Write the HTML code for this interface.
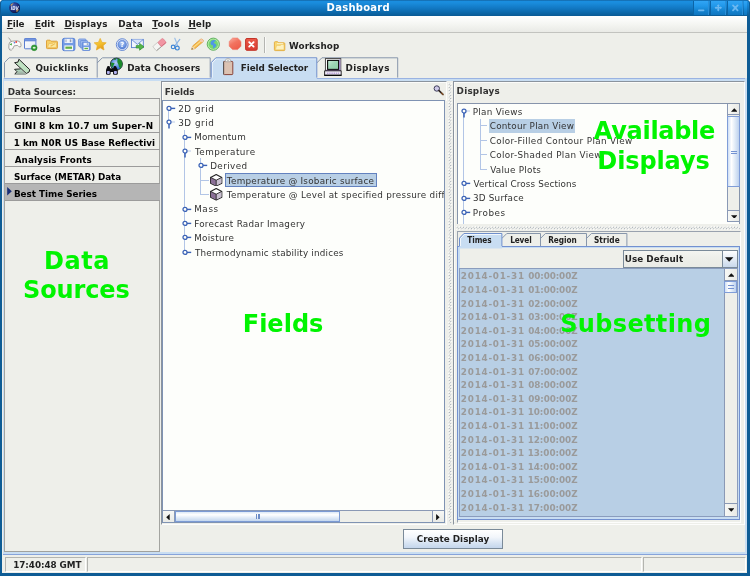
<!DOCTYPE html>
<html lang="en"><head><meta charset="utf-8"><title>Dashboard</title>
<style>
html,body{margin:0;padding:0;background:#fff;overflow:hidden}
body{width:750px;height:576px;position:relative;font-family:'DejaVu Sans','Liberation Sans',sans-serif}
div,span.t,svg{position:absolute;box-sizing:border-box}
span.t{white-space:pre;line-height:12px;height:12px}
u{text-decoration:underline;text-underline-offset:1px;text-decoration-thickness:0.8px}
</style></head>
<body>
<div id="win" style="left:0;top:0;width:750px;height:576px;will-change:transform">
<div style="left:0px;top:0px;width:750px;height:576px;background:#0e5c95;border-radius:4px 4px 0 0"></div>
<div style="left:0px;top:0px;width:750px;height:16.2px;background:linear-gradient(#125f9b 0,#1a8ee0 1.2px,#1a8cdc 3px,#1279c4 8px,#0c68aa 12.5px,#0a5e9a 15px,#0a5a94 16.2px);border-radius:4px 4px 0 0;border-left:1px solid #0e5c95;border-right:1px solid #0e5c95"></div>
<svg style="left:8.8px;top:2px" width="11.4" height="11.4" viewBox="0 0 12 12"><defs><radialGradient id="gl" cx="40%" cy="35%" r="70%"><stop offset="0" stop-color="#4a62b8"/><stop offset="0.6" stop-color="#1c2c78"/><stop offset="1" stop-color="#0a1238"/></radialGradient></defs><circle cx="6" cy="6" r="5.8" fill="url(#gl)"/><path d="M1.2 3.5 Q3 1 5 1.2 Q3.5 2.5 3 4Z" fill="#c9a56a"/><path d="M7.5 8.5 Q9.5 8 10.5 7 Q10 9.5 8 10.8Z" fill="#b58e5a"/><text x="6" y="8" font-size="5.6" font-weight="bold" font-style="italic" text-anchor="middle" fill="#e8ecf8" font-family="DejaVu Sans,sans-serif" textLength="8.4" lengthAdjust="spacingAndGlyphs">IDV</text></svg>
<span class="t" style="left:326.60px;top:1.74px;font-size:10px;font-weight:bold;color:#fff;font-family:'DejaVu Sans','Liberation Sans',sans-serif;letter-spacing:0.265px;">Dashboard</span>
<div style="left:693px;top:0.8px;width:16.4px;height:14px;background:linear-gradient(#31a5f5 0%,#2198ea 35%,#1482cf 70%,#0f76c0 100%);border-left:1px solid #0c64a6;border-right:1px solid #2a90da"></div>
<div style="left:710px;top:0.8px;width:16.4px;height:14px;background:linear-gradient(#31a5f5 0%,#2198ea 35%,#1482cf 70%,#0f76c0 100%);border-left:1px solid #0c64a6;border-right:1px solid #2a90da"></div>
<div style="left:727px;top:0.8px;width:16.4px;height:14px;background:linear-gradient(#31a5f5 0%,#2198ea 35%,#1482cf 70%,#0f76c0 100%);border-left:1px solid #0c64a6;border-right:1px solid #2a90da"></div>
<div style="left:743.5px;top:0.8px;width:3px;height:14px;background:linear-gradient(#31a5f5 0%,#2198ea 35%,#1482cf 70%,#0f76c0 100%)"></div>
<svg style="left:693px;top:0" width="51" height="16" viewBox="0 0 51 16"><g stroke="#6cb8f1" fill="none" stroke-width="1.6" stroke-linecap="round"><path d="M5.8 10.4H10.6"/><path d="M25.3 5.6V10M23 7.8H27.6" stroke-width="1.5"/><path d="M25.3 4.2l1.5 1.8h-3zM25.3 11.4l1.5-1.8h-3zM21.6 7.8l1.8-1.5v3zM29 7.8l-1.8-1.5v3z" fill="#6cb8f1" stroke="none"/><path d="M40 5.4l4.6 5M44.6 5.4l-4.6 5" stroke-width="1.8"/></g></svg>
<div style="left:2.3px;top:16.2px;width:745px;height:556.7px;background:#eeefea"></div>
<div style="left:2.3px;top:16.2px;width:745px;height:16px;background:linear-gradient(#ffffff 0%,#f6f7f4 45%,#e9eae6 100%)"></div>
<div style="left:2.3px;top:32px;width:745px;height:0.9px;background:#c2c3bf"></div>
<span class="t" style="left:6.90px;top:17.76px;font-size:8.8px;font-weight:bold;color:#222;font-family:'DejaVu Sans','Liberation Sans',sans-serif;letter-spacing:-0.131px;"><u>F</u>ile</span>
<span class="t" style="left:34.90px;top:17.76px;font-size:8.8px;font-weight:bold;color:#222;font-family:'DejaVu Sans','Liberation Sans',sans-serif;letter-spacing:0.074px;"><u>E</u>dit</span>
<span class="t" style="left:64.40px;top:17.76px;font-size:8.8px;font-weight:bold;color:#222;font-family:'DejaVu Sans','Liberation Sans',sans-serif;letter-spacing:0.210px;"><u>D</u>isplays</span>
<span class="t" style="left:118.20px;top:17.76px;font-size:8.8px;font-weight:bold;color:#222;font-family:'DejaVu Sans','Liberation Sans',sans-serif;letter-spacing:0.367px;">D<u>a</u>ta</span>
<span class="t" style="left:152.20px;top:17.76px;font-size:8.8px;font-weight:bold;color:#222;font-family:'DejaVu Sans','Liberation Sans',sans-serif;letter-spacing:0.502px;"><u>T</u>ools</span>
<span class="t" style="left:188.40px;top:17.76px;font-size:8.8px;font-weight:bold;color:#222;font-family:'DejaVu Sans','Liberation Sans',sans-serif;letter-spacing:0.100px;"><u>H</u>elp</span>
<svg style="left:6px;top:36px" width="17" height="16" viewBox="6 36 17 16"><path d="M8.5 37.6L12 42" stroke="#8c8c88" stroke-width="0.8" fill="none"/><path d="M9 44Q9.4 41.4 12.2 41.2L17 40.8Q20 40.8 20.8 43.6Q21.5 46.4 20.4 47Q19 47.4 17.6 45.4L14.2 45.8Q13.4 47.4 12.6 49Q11.4 50.8 9.8 50Q8.2 49 9 44Z" fill="#fbfbfa" stroke="#8e8e8a" stroke-width="0.8"/><path d="M9.6 44.4l2.2-1.3v2.4z" fill="#3aa53a"/><circle cx="16.2" cy="42" r="0.95" fill="#e8413c"/><circle cx="14.4" cy="42.8" r="0.8" fill="#4a76e0"/><path d="M10 48.6Q10.6 49.4 11.4 48.8" stroke="#b4b4b0" stroke-width="0.6" fill="none"/></svg>
<svg style="left:23px;top:37px" width="16" height="15" viewBox="23 37 16 15"><defs><linearGradient id="wg" x1="0" y1="0" x2="1" y2="1"><stop offset="0" stop-color="#ffffff"/><stop offset="1" stop-color="#dfe8f6"/></linearGradient></defs><rect x="24.5" y="38.6" width="11.4" height="10.2" rx="0.8" fill="url(#wg)" stroke="#5a7ed0" stroke-width="1"/><rect x="24.5" y="38.6" width="11.4" height="2.4" rx="0.8" fill="#7396e0" stroke="#5a7ed0" stroke-width="0.6"/><circle cx="34.2" cy="47.8" r="2.9" fill="#2e9a32" stroke="#23822a" stroke-width="0.5"/><ellipse cx="34.2" cy="47.7" rx="1.5" ry="1" fill="#d8f2d4"/></svg>
<svg style="left:45px;top:38px" width="15" height="13" viewBox="45 38 15 13"><path d="M46.5 41Q46.5 40.2 47.3 40.2H50L51 41.2H56.6Q57.4 41.2 57.4 42V47.8Q57.4 48.6 56.6 48.6H47.3Q46.5 48.6 46.5 47.8Z" fill="#f7d066" stroke="#dc9c30" stroke-width="0.9"/><path d="M47.6 47.6L48.8 43.6H52.4L53.2 42.6H56.4V47.6Z" fill="#fbe7a0" stroke="#e6b044" stroke-width="0.5"/><path d="M50.6 46.2L55 43.6" stroke="#ecbc4c" stroke-width="1.1"/></svg>
<svg style="left:61px;top:37px" width="16" height="15" viewBox="61 37 16 15"><rect x="62.5" y="38.3" width="12.4" height="12.4" rx="1.8" fill="#739be4" stroke="#5a84d6" stroke-width="1"/><rect x="64.6" y="38.8" width="8" height="4.2" fill="#eef3fc"/><rect x="69.8" y="39.4" width="1.5" height="2.8" fill="#8e9cb8"/><rect x="65.4" y="39.4" width="1.2" height="2.8" fill="#aab4c8"/><rect x="64.4" y="45.4" width="8.6" height="4.8" fill="#f6f9f4"/><rect x="65.4" y="46.6" width="6.6" height="2.2" fill="#62ae44"/></svg>
<svg style="left:77px;top:37px" width="16" height="15" viewBox="77 37 16 15"><rect x="78.6" y="39" width="7.4" height="7.4" rx="0.9" fill="#a9c2f0" stroke="#6088d8" stroke-width="0.8"/><rect x="80.2" y="40.6" width="7.4" height="7.4" rx="0.9" fill="#9bb8ee" stroke="#6088d8" stroke-width="0.8"/><rect x="82.2" y="42.4" width="8" height="8" rx="1" fill="#739be4" stroke="#5a84d6" stroke-width="0.8"/><rect x="83.6" y="42.8" width="5" height="2.6" fill="#eef3fc"/><rect x="86.8" y="43.2" width="1" height="1.8" fill="#8e9cb8"/><rect x="83.6" y="47" width="5.2" height="3" fill="#f6f9f4"/><rect x="84.4" y="47.8" width="3.6" height="1.4" fill="#62ae44"/></svg>
<svg style="left:92px;top:36px" width="17" height="16" viewBox="92 36 17 16"><defs><linearGradient id="sg" x1="0" y1="0" x2="0.4" y2="1"><stop offset="0" stop-color="#fbd447"/><stop offset="0.6" stop-color="#f2be2c"/><stop offset="1" stop-color="#e39a1c"/></linearGradient></defs><path d="M100.2 38.4L102 42.4L106.2 42.8L103.1 45.7L104 50L100.2 47.8L96.4 50L97.3 45.7L94.2 42.8L98.4 42.4Z" fill="url(#sg)" stroke="#e8ac28" stroke-width="0.7" stroke-linejoin="round"/></svg>
<svg style="left:114px;top:37px" width="16" height="15" viewBox="114 37 16 15"><defs><radialGradient id="hg" cx="45%" cy="35%" r="70%"><stop offset="0" stop-color="#b4cdf6"/><stop offset="1" stop-color="#4a78d4"/></radialGradient></defs><circle cx="122.2" cy="44.6" r="5.9" fill="#dfe8fa" stroke="#5a80d0" stroke-width="0.9"/><circle cx="122.2" cy="44.6" r="4.3" fill="url(#hg)" stroke="#4a72c8" stroke-width="0.5"/><text x="122.2" y="47.2" font-size="7" font-weight="bold" text-anchor="middle" fill="#fff" font-family="DejaVu Sans,sans-serif">?</text></svg>
<svg style="left:130px;top:37px" width="16" height="15" viewBox="130 37 16 15"><rect x="131.5" y="39.4" width="11.8" height="8.2" fill="#f0f5fd" stroke="#5a80d0" stroke-width="0.9"/><path d="M131.7 39.6L137.4 44.4L143.1 39.6" fill="#d5e2f8" stroke="#5a80d0" stroke-width="0.8"/><path d="M136.2 45.6H139.6V43.4L144 46.8L139.6 50.2V48H136.2Z" fill="#56b44a" stroke="#2f9030" stroke-width="0.7" stroke-linejoin="round"/></svg>
<svg style="left:151px;top:36px" width="17" height="16" viewBox="151 36 17 16"><g transform="rotate(-40 159.6 44.4)"><rect x="153" y="41.6" width="6.8" height="5.8" rx="0.9" fill="#f4f4f2" stroke="#b8b8b4" stroke-width="0.6"/><path d="M153.4 47.2H159.8" stroke="#9a9a96" stroke-width="0.9"/><rect x="159.4" y="41.6" width="6.6" height="5.8" rx="1.1" fill="#f195a2" stroke="#dc7a88" stroke-width="0.6"/><path d="M159.6 47H165.6" stroke="#d06a7a" stroke-width="0.8"/></g></svg>
<svg style="left:169px;top:36px" width="14" height="16" viewBox="169 36 14 16"><path d="M174.8 38.2L177.6 45.4" stroke="#9cbfe8" stroke-width="1.2" stroke-linecap="round"/><path d="M179.8 39.4L175 45.6" stroke="#8ab2e2" stroke-width="1.2" stroke-linecap="round"/><circle cx="173.1" cy="46.9" r="1.8" fill="none" stroke="#3f86d6" stroke-width="1.2"/><circle cx="177.3" cy="48.1" r="1.9" fill="none" stroke="#3f86d6" stroke-width="1.2"/></svg>
<svg style="left:189px;top:36px" width="17" height="16" viewBox="189 36 17 16"><path d="M191.6 49.4L192.6 46L200.4 39.4Q201.6 38.6 202.8 39.8Q203.8 41 203 41.8L195 48.6Z" fill="#f6b84a" stroke="#dc9428" stroke-width="0.7" stroke-linejoin="round"/><path d="M193.8 47.2L201.4 40.6" stroke="#fbe08e" stroke-width="1.1"/><path d="M200.4 39.4Q201.6 38.6 202.8 39.8Q203.8 41 203 41.8L202 42.6L199.4 40.2Z" fill="#f4c8b4"/><path d="M191.6 49.4L192.6 46L195 48.6Z" fill="#f3d9b0"/><path d="M191.6 49.4L192 48L193 48.9Z" fill="#444"/></svg>
<svg style="left:205px;top:36px" width="17" height="16" viewBox="205 36 17 16"><circle cx="213.3" cy="44.2" r="6.1" fill="#b4eaa6" stroke="#58aa58" stroke-width="0.9"/><circle cx="213.3" cy="44.2" r="4.7" fill="#74d870"/><path d="M212 40.4Q214.6 39.6 216 41Q214 41.6 213.6 43Q215.6 43.4 216.4 45.2Q215.6 47.6 213.4 48.6Q212.6 47 213.2 45.6Q211 45.4 210.4 43.4Q210.6 41.4 212 40.4Z" fill="#4f96e6"/></svg>
<svg style="left:227px;top:36px" width="16" height="15" viewBox="227 36 16 15"><defs><linearGradient id="rg" x1="0" y1="0" x2="0.6" y2="1"><stop offset="0" stop-color="#fbb0a4"/><stop offset="0.5" stop-color="#f27460"/><stop offset="1" stop-color="#ee5e4c"/></linearGradient></defs><path d="M232.6 38H237.6L241 41.4V46.2L237.6 49.6H232.6L229.2 46.2V41.4Z" fill="url(#rg)" stroke="#ee6e5e" stroke-width="0.5"/></svg>
<svg style="left:243px;top:36px" width="16" height="15" viewBox="243 36 16 15"><defs><linearGradient id="xg" x1="0" y1="0" x2="0" y2="1"><stop offset="0" stop-color="#ec5a4a"/><stop offset="1" stop-color="#d83a30"/></linearGradient></defs><rect x="245.6" y="38.5" width="11.6" height="11.8" rx="1.4" fill="url(#xg)" stroke="#c23428" stroke-width="1"/><path d="M249.2 42.2L253.6 46.6M253.6 42.2L249.2 46.6" stroke="#fff" stroke-width="1.9" stroke-linecap="round"/></svg>
<svg style="left:272px;top:39px" width="15" height="13" viewBox="272 39 15 13"><path d="M274.4 42.4Q274.4 41.7 275.2 41.7H277.6L278.6 42.8H284Q284.8 42.8 284.8 43.6V49.8Q284.8 50.6 284 50.6H275.2Q274.4 50.6 274.4 49.8Z" fill="#f8d874" stroke="#e2aa3a" stroke-width="0.9"/><path d="M275.4 49.8L276.6 45.4H280.4L281.2 44.4H284V49.8Z" fill="#fdf1c0" stroke="#eabc54" stroke-width="0.5"/><path d="M277 43.6H283" stroke="#fdf6dc" stroke-width="0.8"/></svg>
<div style="left:263.6px;top:37px;width:1px;height:15.5px;background:#b4b5b1"></div>
<div style="left:264.6px;top:37px;width:1px;height:15.5px;background:#fafaf8"></div>
<span class="t" style="left:288.95px;top:39.56px;font-size:8.8px;font-weight:bold;color:#222;font-family:'DejaVu Sans','Liberation Sans',sans-serif;letter-spacing:0.132px;">Workshop</span>
<div style="left:3px;top:78px;width:744.2px;height:3.2px;background:#c8ddf2"></div>
<div style="left:3px;top:77.5px;width:744.2px;height:0.9px;background:#9ab3e2"></div>
<div style="left:2.6px;top:78px;width:1.6px;height:475.5px;background:#c8ddf2"></div>
<div style="left:745.4px;top:78px;width:1.8px;height:475.5px;background:#c8ddf2"></div>
<div style="left:3px;top:552px;width:744.2px;height:1.6px;background:#c8ddf2"></div>
<div style="left:3px;top:553.5px;width:744.2px;height:0.9px;background:#86a3da"></div>
<svg style="left:3px;top:56px" width="97" height="27" viewBox="3 56 97 27"><path d="M4.5 77.6V62.6L9.1 57.8H97.2V77.6" fill="#eeefea" stroke="#8796ab" stroke-width="1"/></svg>
<svg style="left:96px;top:56px" width="117" height="27" viewBox="96 56 117 27"><path d="M97.1 63L102.3 57.8H210.2V77.6" fill="none" stroke="#8796ab" stroke-width="1"/></svg>
<svg style="left:315px;top:56px" width="86" height="27" viewBox="315 56 86 27"><path d="M316.7 63L321.9 57.8H397.7V77.6" fill="none" stroke="#8796ab" stroke-width="1"/></svg>
<svg style="left:209px;top:56px" width="111" height="27" viewBox="209 56 111 27"><path d="M211.2 81.2V62.6L215.8 57.8H316.8V81.2Z" fill="#c8ddf2"/><path d="M212.2 77.6V63L216.2 58.8H316" fill="none" stroke="#fff" stroke-width="0.9" opacity="0.85"/><path d="M211.2 77.6V62.6L215.8 57.8H316.8V77.6" fill="none" stroke="#6f8fcc" stroke-width="1"/></svg>
<svg style="left:12px;top:57px" width="20" height="20" viewBox="12 57 20 20"><defs><linearGradient id="qg" x1="0" y1="0" x2="0" y2="1"><stop offset="0" stop-color="#b6e2c6"/><stop offset="1" stop-color="#9aa49c"/></linearGradient></defs><path d="M14.8 69.3L20.6 68.9L26 74.4H14.8L16.9 71.6Z" fill="url(#qg)"/><path d="M26 74.4H14.8" stroke="#8f9a94" stroke-width="0.7" fill="none"/><path d="M20.6 68.9L14.6 69.3L16.9 71.6L14.8 74.2" stroke="#111" stroke-width="0.9" fill="none" stroke-linejoin="miter"/><path d="M18.9 59.2L29.7 69.6L29.1 72L26.3 73.5L15.2 63.2L14.6 62.7L18 62.1Z" fill="#c0e2c2" stroke="#111" stroke-width="0.9" stroke-linejoin="round"/></svg>
<svg style="left:104px;top:57px" width="22" height="20" viewBox="104 57 22 20"><defs><radialGradient id="dg" cx="45%" cy="40%" r="60%"><stop offset="0" stop-color="#b8cff6"/><stop offset="0.6" stop-color="#5a8fe0"/><stop offset="1" stop-color="#2a6ac8"/></radialGradient></defs><circle cx="116.4" cy="64.1" r="6" fill="url(#dg)" stroke="#1a2a1e" stroke-width="0.9"/><path d="M117.6 58.6Q121.6 59 122.3 63.4Q122.4 66.4 120.4 68.4Q118.6 66.8 118.4 64.4Q116.6 62.4 117.6 58.6Z" fill="#1c8a2c"/><path d="M111 62.4Q112.8 62.6 114.6 63.2Q113.4 65 112.6 67.6Q110.6 66 111 62.4Z" fill="#1c8a2c"/><path d="M113.4 59.4Q115 58.4 116.4 58.6L115.4 60Z" fill="#1c8a2c"/><path d="M107.4 66.2Q108.4 65.6 109.6 66.2L110.6 69.4V73.6Q110.6 74.8 109.4 74.8H107.2Q106 74.8 106 73.6V70Z" fill="#0c0c10"/><path d="M113.8 66.2Q114.8 65.6 116 66.2L117.8 70V73.6Q117.8 74.8 116.6 74.8H114.2Q113 74.8 113 73.6V69.4Z" fill="#0c0c10"/><rect x="110" y="68.4" width="3.6" height="3.6" fill="#0c0c10"/><rect x="106.9" y="71" width="2.9" height="2.9" rx="0.8" fill="#b2b2ee"/><rect x="113.9" y="71" width="3" height="2.9" rx="0.8" fill="#b2b2ee"/></svg>
<svg style="left:221px;top:57px" width="14" height="20" viewBox="221 57 14 20"><rect x="223.6" y="61.4" width="9.2" height="13.2" rx="0.8" fill="#dcc2b2" stroke="#8a4438" stroke-width="1"/><path d="M223.6 61.6V74.4" stroke="#555" stroke-width="1"/><path d="M225.2 61.8Q225.2 58.4 228 58.4Q230.8 58.4 230.8 61.8Z" fill="#f6f6f4" stroke="#a2a29e" stroke-width="0.7"/><circle cx="228" cy="60.2" r="0.7" fill="#9a9a96"/></svg>
<svg style="left:322px;top:57px" width="22" height="20" viewBox="322 57 22 20"><defs><linearGradient id="cg" x1="0" y1="0" x2="1" y2="1"><stop offset="0" stop-color="#c8ecd8"/><stop offset="0.5" stop-color="#9cd4b4"/><stop offset="1" stop-color="#8ed0a8"/></linearGradient></defs><rect x="325.4" y="58.6" width="15.4" height="11.8" fill="#fbfbfb" stroke="#3a3a3a" stroke-width="0.9"/><rect x="339" y="59.4" width="1.4" height="10.6" fill="#b49adc"/><rect x="327.6" y="60.4" width="11" height="9" fill="url(#cg)" stroke="#0a0a0a" stroke-width="1.1"/><path d="M326 70.4H340.4" stroke="#7a4ea8" stroke-width="0.9"/><path d="M324.6 70.8H341.2V75.2H324.6Z" fill="#ece6f4" stroke="#1a1a1a" stroke-width="0.9"/><path d="M324.2 75.4H341.6" stroke="#0a0a0a" stroke-width="1.2"/><path d="M327 73.2H339" stroke="#a88ace" stroke-width="1" stroke-dasharray="1.4 0.8"/></svg>
<span class="t" style="left:35.40px;top:61.96px;font-size:8.8px;font-weight:bold;color:#222;font-family:'DejaVu Sans','Liberation Sans',sans-serif;letter-spacing:0.219px;">Quicklinks</span>
<span class="t" style="left:127.20px;top:61.96px;font-size:8.8px;font-weight:bold;color:#222;font-family:'DejaVu Sans','Liberation Sans',sans-serif;letter-spacing:0.095px;">Data Choosers</span>
<span class="t" style="left:240.80px;top:61.96px;font-size:8.8px;font-weight:bold;color:#222;font-family:'DejaVu Sans','Liberation Sans',sans-serif;letter-spacing:-0.083px;">Field Selector</span>
<span class="t" style="left:345.60px;top:61.96px;font-size:8.8px;font-weight:bold;color:#222;font-family:'DejaVu Sans','Liberation Sans',sans-serif;letter-spacing:0.324px;">Displays</span>
<div style="left:4.2px;top:98px;width:156px;height:453.6px;border-left:1px solid #a3a4a0;border-right:1px solid #a3a4a0;border-bottom:1px solid #a0a19d"></div>
<span class="t" style="left:7.80px;top:85.76px;font-size:8.8px;font-weight:bold;color:#333;font-family:'DejaVu Sans','Liberation Sans',sans-serif;letter-spacing:-0.101px;">Data Sources:</span>
<div style="left:5px;top:182.8px;width:154.6px;height:17px;background:#b5b5b5"></div>
<div style="left:5px;top:98px;width:154.6px;height:1px;background:#9b9b9b"></div>
<span class="t" style="left:13.90px;top:102.76px;font-size:8.8px;font-weight:bold;color:#000;font-family:'DejaVu Sans','Liberation Sans',sans-serif;letter-spacing:0.160px;">Formulas</span>
<div style="left:5px;top:115px;width:154.6px;height:1px;background:#9b9b9b"></div>
<span class="t" style="left:14.30px;top:119.76px;font-size:8.8px;font-weight:bold;color:#000;font-family:'DejaVu Sans','Liberation Sans',sans-serif;letter-spacing:0.158px;">GINI 8 km 10.7 um Super-N</span>
<div style="left:5px;top:132px;width:154.6px;height:1px;background:#9b9b9b"></div>
<span class="t" style="left:13.75px;top:136.76px;font-size:8.8px;font-weight:bold;color:#000;font-family:'DejaVu Sans','Liberation Sans',sans-serif;letter-spacing:0.022px;">1 km N0R US Base Reflectivi</span>
<div style="left:5px;top:149px;width:154.6px;height:1px;background:#9b9b9b"></div>
<span class="t" style="left:14.70px;top:153.76px;font-size:8.8px;font-weight:bold;color:#000;font-family:'DejaVu Sans','Liberation Sans',sans-serif;letter-spacing:0.094px;">Analysis Fronts</span>
<div style="left:5px;top:166px;width:154.6px;height:1px;background:#9b9b9b"></div>
<span class="t" style="left:14.10px;top:170.76px;font-size:8.8px;font-weight:bold;color:#000;font-family:'DejaVu Sans','Liberation Sans',sans-serif;letter-spacing:-0.107px;">Surface (METAR) Data</span>
<div style="left:5px;top:183px;width:154.6px;height:1px;background:#9b9b9b"></div>
<span class="t" style="left:13.90px;top:187.76px;font-size:8.8px;font-weight:bold;color:#000;font-family:'DejaVu Sans','Liberation Sans',sans-serif;letter-spacing:-0.006px;">Best Time Series</span>
<div style="left:5px;top:200px;width:154.6px;height:1px;background:#9b9b9b"></div>
<svg style="left:7px;top:187.4px" width="5" height="8.4" viewBox="0 0 5 8.4"><path d="M0.2 0L4.8 4.2L0.2 8.4Z" fill="#1a2f78"/></svg>
<div style="left:161px;top:81.4px;width:286.4px;height:443.4px;border-left:1px solid #8a939e;border-top:1px solid #8a939e;border-right:1.6px solid #fdfdfc;border-bottom:1.6px solid #fdfdfc"></div>
<div style="left:162px;top:82.4px;width:283.6px;height:1px;background:#fbfbf9"></div>
<div style="left:162px;top:82.4px;width:0.8px;height:440px;background:#fbfbf9"></div>
<span class="t" style="left:164.80px;top:85.56px;font-size:8.8px;font-weight:bold;color:#333;font-family:'DejaVu Sans','Liberation Sans',sans-serif;letter-spacing:0.048px;">Fields</span>
<svg style="left:432px;top:84px" width="14" height="12" viewBox="432 84 14 12"><circle cx="436.8" cy="88.5" r="2.7" fill="#cdc8e8" stroke="#3c3c58" stroke-width="1"/><path d="M439 90.6L442.9 94.3" stroke="#2e2420" stroke-width="1.7" stroke-linecap="round"/><path d="M441.6 93.1L443.1 94.5" stroke="#d0782c" stroke-width="1" stroke-linecap="round"/></svg>
<div style="left:162.4px;top:100px;width:282.6px;height:423px;background:#fdfefb;border:1px solid #7f93b3"></div>
<div style="left:168.1px;top:108px;width:1px;height:15px;background:#b2c5e6"></div>
<div style="left:184px;top:129.6px;width:1px;height:122.8px;background:#b2c5e6"></div>
<div style="left:200px;top:158px;width:1px;height:36.6px;background:#b2c5e6"></div>
<div style="left:200.5px;top:179.7px;width:8.5px;height:1px;background:#b2c5e6"></div>
<div style="left:200.5px;top:194.1px;width:8.5px;height:1px;background:#b2c5e6"></div>
<div style="left:225px;top:173.4px;width:151.6px;height:13.8px;background:#b8cfe5;border:1px solid #6382bf"></div>
<svg style="left:165px;top:104.8px" width="12" height="8" viewBox="0 0 12 8"><path d="M6 3.4H10.2" stroke="#3a62b6" stroke-width="1.4"/><circle cx="4" cy="3.4" r="2" fill="#fdfefb" stroke="#3a62b6" stroke-width="1.25"/></svg>
<span class="t" style="left:178.20px;top:102.56px;font-size:8.8px;font-weight:normal;color:#333;font-family:'DejaVu Sans','Liberation Sans',sans-serif;letter-spacing:0.546px;">2D grid</span>
<svg style="left:165px;top:119.2px" width="12" height="11" viewBox="0 0 12 11"><path d="M4 5V9.4" stroke="#3a62b6" stroke-width="1.5"/><path d="M6 3H10" stroke="#b2c5e6" stroke-width="0.9"/><circle cx="4" cy="3" r="2" fill="#fdfefb" stroke="#3a62b6" stroke-width="1.25"/></svg>
<span class="t" style="left:178.15px;top:116.96px;font-size:8.8px;font-weight:normal;color:#333;font-family:'DejaVu Sans','Liberation Sans',sans-serif;letter-spacing:0.555px;">3D grid</span>
<svg style="left:181px;top:133.6px" width="12" height="8" viewBox="0 0 12 8"><path d="M6 3.4H10.2" stroke="#3a62b6" stroke-width="1.4"/><circle cx="4" cy="3.4" r="2" fill="#fdfefb" stroke="#3a62b6" stroke-width="1.25"/></svg>
<span class="t" style="left:194.15px;top:131.36px;font-size:8.8px;font-weight:normal;color:#333;font-family:'DejaVu Sans','Liberation Sans',sans-serif;letter-spacing:0.205px;">Momentum</span>
<svg style="left:181px;top:148px" width="12" height="11" viewBox="0 0 12 11"><path d="M4 5V9.4" stroke="#3a62b6" stroke-width="1.5"/><path d="M6 3H10" stroke="#b2c5e6" stroke-width="0.9"/><circle cx="4" cy="3" r="2" fill="#fdfefb" stroke="#3a62b6" stroke-width="1.25"/></svg>
<span class="t" style="left:195.05px;top:145.76px;font-size:8.8px;font-weight:normal;color:#333;font-family:'DejaVu Sans','Liberation Sans',sans-serif;letter-spacing:0.427px;">Temperature</span>
<svg style="left:197px;top:162.4px" width="12" height="8" viewBox="0 0 12 8"><path d="M6 3.4H10.2" stroke="#3a62b6" stroke-width="1.4"/><circle cx="4" cy="3.4" r="2" fill="#fdfefb" stroke="#3a62b6" stroke-width="1.25"/></svg>
<span class="t" style="left:210.15px;top:160.16px;font-size:8.8px;font-weight:normal;color:#333;font-family:'DejaVu Sans','Liberation Sans',sans-serif;letter-spacing:0.429px;">Derived</span>
<svg style="left:210.4px;top:173.6px" width="12.4" height="12.6" viewBox="0 0 12.4 12.6"><path d="M6.2 0.6L11.8 3.4V9.2L6.2 12L0.6 9.2V3.4Z" fill="#fff" stroke="#222" stroke-width="1.1" stroke-linejoin="round"/><path d="M0.9 3.7L6.2 6.3V11.7L0.9 9.1Z" fill="#8a6f96"/><path d="M11.5 3.7L6.2 6.3V11.7L11.5 9.1Z" fill="#c9bfd0"/><path d="M0.6 3.4L6.2 6.2L11.8 3.4M6.2 6.2V12" fill="none" stroke="#222" stroke-width="0.9"/></svg>
<span class="t" style="left:226.85px;top:174.56px;font-size:8.8px;font-weight:normal;color:#333;font-family:'DejaVu Sans','Liberation Sans',sans-serif;letter-spacing:0.252px;">Temperature @ Isobaric surface</span>
<svg style="left:210.4px;top:188px" width="12.4" height="12.6" viewBox="0 0 12.4 12.6"><path d="M6.2 0.6L11.8 3.4V9.2L6.2 12L0.6 9.2V3.4Z" fill="#fff" stroke="#222" stroke-width="1.1" stroke-linejoin="round"/><path d="M0.9 3.7L6.2 6.3V11.7L0.9 9.1Z" fill="#8a6f96"/><path d="M11.5 3.7L6.2 6.3V11.7L11.5 9.1Z" fill="#c9bfd0"/><path d="M0.6 3.4L6.2 6.2L11.8 3.4M6.2 6.2V12" fill="none" stroke="#222" stroke-width="0.9"/></svg>
<span class="t" style="left:226.85px;top:188.96px;font-size:8.8px;font-weight:normal;color:#333;font-family:'DejaVu Sans','Liberation Sans',sans-serif;letter-spacing:0.286px;">Temperature @ Level at specified pressure diff</span>
<svg style="left:181px;top:205.6px" width="12" height="8" viewBox="0 0 12 8"><path d="M6 3.4H10.2" stroke="#3a62b6" stroke-width="1.4"/><circle cx="4" cy="3.4" r="2" fill="#fdfefb" stroke="#3a62b6" stroke-width="1.25"/></svg>
<span class="t" style="left:194.15px;top:203.36px;font-size:8.8px;font-weight:normal;color:#333;font-family:'DejaVu Sans','Liberation Sans',sans-serif;letter-spacing:0.627px;">Mass</span>
<svg style="left:181px;top:220px" width="12" height="8" viewBox="0 0 12 8"><path d="M6 3.4H10.2" stroke="#3a62b6" stroke-width="1.4"/><circle cx="4" cy="3.4" r="2" fill="#fdfefb" stroke="#3a62b6" stroke-width="1.25"/></svg>
<span class="t" style="left:194.15px;top:217.76px;font-size:8.8px;font-weight:normal;color:#333;font-family:'DejaVu Sans','Liberation Sans',sans-serif;letter-spacing:0.275px;">Forecast Radar Imagery</span>
<svg style="left:181px;top:234.4px" width="12" height="8" viewBox="0 0 12 8"><path d="M6 3.4H10.2" stroke="#3a62b6" stroke-width="1.4"/><circle cx="4" cy="3.4" r="2" fill="#fdfefb" stroke="#3a62b6" stroke-width="1.25"/></svg>
<span class="t" style="left:194.15px;top:232.16px;font-size:8.8px;font-weight:normal;color:#333;font-family:'DejaVu Sans','Liberation Sans',sans-serif;letter-spacing:0.263px;">Moisture</span>
<svg style="left:181px;top:248.8px" width="12" height="8" viewBox="0 0 12 8"><path d="M6 3.4H10.2" stroke="#3a62b6" stroke-width="1.4"/><circle cx="4" cy="3.4" r="2" fill="#fdfefb" stroke="#3a62b6" stroke-width="1.25"/></svg>
<span class="t" style="left:195.05px;top:246.56px;font-size:8.8px;font-weight:normal;color:#333;font-family:'DejaVu Sans','Liberation Sans',sans-serif;letter-spacing:0.181px;">Thermodynamic stability indices</span>
<div style="left:444px;top:101px;width:1px;height:409px;background:#7f93b3"></div>
<div style="left:445px;top:101px;width:2px;height:409px;background:#eeefea"></div>
<div style="left:163.4px;top:510.4px;width:280.6px;height:11.6px;background:#eeefea;border-top:1px solid #8a99b5"></div>
<div style="left:163.4px;top:511.2px;width:11.8px;height:10.8px;background:linear-gradient(#f7f8f5,#e9eae6);border-right:1px solid #8a99b5"></div>
<div style="left:431.8px;top:511.2px;width:12.2px;height:10.8px;background:linear-gradient(#f7f8f5,#e9eae6);border-left:1px solid #8a99b5"></div>
<svg style="left:166.3px;top:513.8px" width="3.8" height="6.6" viewBox="0 0 3.8 6.6"><path d="M3.7 0V6.6L0.2 3.3Z" fill="#111"/></svg>
<svg style="left:436.2px;top:513.8px" width="3.8" height="6.6" viewBox="0 0 3.8 6.6"><path d="M0.1 0V6.6L3.6 3.3Z" fill="#111"/></svg>
<div style="left:175.2px;top:510.8px;width:164.4px;height:11.2px;background:linear-gradient(#dce8f6 0%,#ffffff 30%,#e4edf8 60%,#c3d6ee 100%);border:1px solid #7b9ad4"></div>
<div style="left:255.8px;top:513.6px;width:0.9px;height:5.8px;background:#6c8cc6"></div>
<div style="left:257.6px;top:513.6px;width:0.9px;height:5.8px;background:#6c8cc6"></div>
<div style="left:259.4px;top:513.6px;width:0.9px;height:5.8px;background:#6c8cc6"></div>
<div style="left:448.2px;top:83px;width:3.4px;height:440px;background-image:radial-gradient(circle at 1.2px 1.2px,#8792a4 0.35px,transparent 0.75px),radial-gradient(circle at 2.8px 2.8px,#8792a4 0.35px,transparent 0.75px),radial-gradient(circle at 0.4px 0.4px,#fff 0.35px,transparent 0.75px),radial-gradient(circle at 2px 2px,#fff 0.35px,transparent 0.75px);background-size:3.2px 3.2px"></div>
<div style="left:453px;top:81.4px;width:292px;height:443.4px;border-left:1px solid #8a939e;border-top:1px solid #8a939e;border-right:1.6px solid #fdfdfc;border-bottom:1.6px solid #fdfdfc"></div>
<div style="left:454px;top:82.4px;width:289.4px;height:1px;background:#fbfbf9"></div>
<div style="left:454px;top:82.4px;width:0.8px;height:440px;background:#fbfbf9"></div>
<span class="t" style="left:456.60px;top:85.36px;font-size:8.8px;font-weight:bold;color:#333;font-family:'DejaVu Sans','Liberation Sans',sans-serif;letter-spacing:0.239px;">Displays</span>
<div style="left:457px;top:103.2px;width:283.2px;height:120.4px;background:#fdfefb;border:1px solid #8694ab;border-bottom:none"></div>
<div style="left:463.3px;top:113px;width:1px;height:110.6px;background:#b2c5e6"></div>
<div style="left:479.5px;top:119px;width:1px;height:50.2px;background:#b2c5e6"></div>
<div style="left:480px;top:125.3px;width:7px;height:1px;background:#b2c5e6"></div>
<div style="left:480px;top:139.7px;width:7px;height:1px;background:#b2c5e6"></div>
<div style="left:480px;top:154.1px;width:7px;height:1px;background:#b2c5e6"></div>
<div style="left:480px;top:168.5px;width:7px;height:1px;background:#b2c5e6"></div>
<div style="left:489.2px;top:119px;width:86px;height:13.6px;background:#b8cfe5"></div>
<svg style="left:460px;top:108.2px" width="12" height="11" viewBox="0 0 12 11"><path d="M4 5V9.4" stroke="#3a62b6" stroke-width="1.5"/><path d="M6 3H10" stroke="#b2c5e6" stroke-width="0.9"/><circle cx="4" cy="3" r="2" fill="#fdfefb" stroke="#3a62b6" stroke-width="1.25"/></svg>
<span class="t" style="left:472.75px;top:105.96px;font-size:8.8px;font-weight:normal;color:#333;font-family:'DejaVu Sans','Liberation Sans',sans-serif;letter-spacing:0.294px;">Plan Views</span>
<span class="t" style="left:489.75px;top:120.36px;font-size:8.8px;font-weight:normal;color:#333;font-family:'DejaVu Sans','Liberation Sans',sans-serif;letter-spacing:0.241px;">Contour Plan View</span>
<span class="t" style="left:489.75px;top:134.76px;font-size:8.8px;font-weight:normal;color:#333;font-family:'DejaVu Sans','Liberation Sans',sans-serif;letter-spacing:0.377px;">Color-Filled Contour Plan View</span>
<span class="t" style="left:489.75px;top:149.16px;font-size:8.8px;font-weight:normal;color:#333;font-family:'DejaVu Sans','Liberation Sans',sans-serif;letter-spacing:0.375px;">Color-Shaded Plan View</span>
<span class="t" style="left:490.15px;top:163.56px;font-size:8.8px;font-weight:normal;color:#333;font-family:'DejaVu Sans','Liberation Sans',sans-serif;letter-spacing:0.270px;">Value Plots</span>
<svg style="left:460px;top:180.2px" width="12" height="8" viewBox="0 0 12 8"><path d="M6 3.4H10.2" stroke="#3a62b6" stroke-width="1.4"/><circle cx="4" cy="3.4" r="2" fill="#fdfefb" stroke="#3a62b6" stroke-width="1.25"/></svg>
<span class="t" style="left:473.55px;top:177.96px;font-size:8.8px;font-weight:normal;color:#333;font-family:'DejaVu Sans','Liberation Sans',sans-serif;letter-spacing:0.132px;">Vertical Cross Sections</span>
<svg style="left:460px;top:194.6px" width="12" height="8" viewBox="0 0 12 8"><path d="M6 3.4H10.2" stroke="#3a62b6" stroke-width="1.4"/><circle cx="4" cy="3.4" r="2" fill="#fdfefb" stroke="#3a62b6" stroke-width="1.25"/></svg>
<span class="t" style="left:472.95px;top:192.36px;font-size:8.8px;font-weight:normal;color:#333;font-family:'DejaVu Sans','Liberation Sans',sans-serif;letter-spacing:0.224px;">3D Surface</span>
<svg style="left:460px;top:209px" width="12" height="8" viewBox="0 0 12 8"><path d="M6 3.4H10.2" stroke="#3a62b6" stroke-width="1.4"/><circle cx="4" cy="3.4" r="2" fill="#fdfefb" stroke="#3a62b6" stroke-width="1.25"/></svg>
<span class="t" style="left:472.75px;top:206.76px;font-size:8.8px;font-weight:normal;color:#333;font-family:'DejaVu Sans','Liberation Sans',sans-serif;letter-spacing:0.578px;">Probes</span>
<div style="left:727.2px;top:104.2px;width:12.2px;height:117.6px;background:#eeefea;border-left:1px solid #8a99b5"></div>
<div style="left:728.2px;top:104.2px;width:11.2px;height:11.2px;background:linear-gradient(90deg,#f7f8f5,#e9eae6);border-bottom:1px solid #8a99b5"></div>
<div style="left:728.2px;top:210.2px;width:11.2px;height:11.6px;background:linear-gradient(90deg,#f7f8f5,#e9eae6);border-top:1px solid #8a99b5"></div>
<svg style="left:730.5px;top:108.2px" width="6.6" height="3.8" viewBox="0 0 6.6 3.8"><path d="M0 3.7H6.6L3.3 0.2Z" fill="#111"/></svg>
<svg style="left:730.5px;top:214.7px" width="6.6" height="3.8" viewBox="0 0 6.6 3.8"><path d="M0 0.2H6.6L3.3 3.7Z" fill="#111"/></svg>
<div style="left:727.2px;top:115.8px;width:12.4px;height:70.8px;background:linear-gradient(90deg,#cfdff4 0%,#ffffff 32%,#e4edf8 60%,#bdd1ee 100%);border:1px solid #7f9dd8"></div>
<div style="left:730.6px;top:150.7px;width:6.4px;height:1.1px;background:#7492d2"></div>
<div style="left:730.6px;top:152.8px;width:6.4px;height:1.1px;background:#7492d2"></div>
<div style="left:727.2px;top:221.4px;width:13px;height:0.9px;background:#8a99b5"></div>
<div style="left:456px;top:226.2px;width:284px;height:3.4px;background-image:radial-gradient(circle at 1.2px 1.2px,#8792a4 0.35px,transparent 0.75px),radial-gradient(circle at 2.8px 2.8px,#8792a4 0.35px,transparent 0.75px),radial-gradient(circle at 0.4px 0.4px,#fff 0.35px,transparent 0.75px),radial-gradient(circle at 2px 2px,#fff 0.35px,transparent 0.75px);background-size:3.2px 3.2px"></div>
<div style="left:457px;top:231px;width:284.4px;height:291.6px;border-left:1px solid #99a2ae;border-top:1px solid #99a2ae;border-right:1px solid #fdfdfc;border-bottom:1px solid #fdfdfc"></div>
<div style="left:457.2px;top:245.8px;width:283px;height:274.2px;background:#7391d0"></div>
<div style="left:458.2px;top:246.6px;width:281.2px;height:272.6px;background:#c8ddf2"></div>
<div style="left:460.2px;top:248.4px;width:277.6px;height:268.2px;background:#eeefea"></div>
<svg style="left:500px;top:232px" width="44" height="18" viewBox="500 232 44 18"><path d="M501.8 238.5L506.8 233.5H540.5V246" fill="none" stroke="#8796ab" stroke-width="1"/></svg>
<svg style="left:539px;top:232px" width="51" height="18" viewBox="539 232 51 18"><path d="M540.4 238.5L545.4 233.5H586.5V246" fill="none" stroke="#8796ab" stroke-width="1"/></svg>
<svg style="left:585px;top:232px" width="45" height="18" viewBox="585 232 45 18"><path d="M586.4 238.5L591.4 233.5H626.9V246" fill="none" stroke="#8796ab" stroke-width="1"/></svg>
<svg style="left:458px;top:232px" width="47" height="18" viewBox="458 232 47 18"><path d="M459.5 248.4V238.1L463.9 233.5H501.9V248.4Z" fill="#c8ddf2"/><path d="M460.5 246V238.5L464.3 234.5H501.1" fill="none" stroke="#fff" stroke-width="0.9" opacity="0.85"/><path d="M459.5 246V238.1L463.9 233.5H501.9V246" fill="none" stroke="#6f8fcc" stroke-width="1"/></svg>
<span class="t" style="left:467.20px;top:233.76px;font-size:8.2px;font-weight:bold;color:#222;font-family:'DejaVu Sans Condensed','DejaVu Sans','Liberation Sans',sans-serif;letter-spacing:-0.025px;">Times</span>
<span class="t" style="left:510.15px;top:233.76px;font-size:8.2px;font-weight:bold;color:#222;font-family:'DejaVu Sans Condensed','DejaVu Sans','Liberation Sans',sans-serif;letter-spacing:-0.105px;">Level</span>
<span class="t" style="left:548.15px;top:233.76px;font-size:8.2px;font-weight:bold;color:#222;font-family:'DejaVu Sans Condensed','DejaVu Sans','Liberation Sans',sans-serif;letter-spacing:-0.043px;">Region</span>
<span class="t" style="left:593.90px;top:233.76px;font-size:8.2px;font-weight:bold;color:#222;font-family:'DejaVu Sans Condensed','DejaVu Sans','Liberation Sans',sans-serif;letter-spacing:0.112px;">Stride</span>
<div style="left:623px;top:249.6px;width:114.6px;height:18.6px;background:linear-gradient(#f4f5f1,#eeefea 40%,#eaebe6);border:1px solid #7a8a99"></div>
<div style="left:722px;top:250.6px;width:14.6px;height:16.6px;background:linear-gradient(#ffffff,#dfe8f3 60%,#c9d8ec);border-left:1px solid #7a8a99"></div>
<svg style="left:725.2px;top:257.2px" width="8.4" height="5" viewBox="0 0 8.4 5"><path d="M0 0.2H8.4L4.2 4.8Z" fill="#111"/></svg>
<span class="t" style="left:624.80px;top:252.56px;font-size:8.8px;font-weight:bold;color:#222;font-family:'DejaVu Sans','Liberation Sans',sans-serif;letter-spacing:0.041px;">Use Default</span>
<div style="left:459.4px;top:268px;width:278.2px;height:248.8px;background:#b8cfe5;border:1px solid #8a9cbd;overflow:hidden"></div>
<span class="t" style="left:460.85px;top:270.36px;font-size:8.8px;font-weight:bold;color:#9a9a9a;font-family:'DejaVu Sans','Liberation Sans',sans-serif;letter-spacing:0.770px;">2014-01-31</span>
<span class="t" style="left:528.20px;top:270.36px;font-size:8.8px;font-weight:bold;color:#9a9a9a;font-family:'DejaVu Sans','Liberation Sans',sans-serif;letter-spacing:-0.097px;">00:00:00Z</span>
<span class="t" style="left:460.85px;top:283.96px;font-size:8.8px;font-weight:bold;color:#9a9a9a;font-family:'DejaVu Sans','Liberation Sans',sans-serif;letter-spacing:0.770px;">2014-01-31</span>
<span class="t" style="left:528.20px;top:283.96px;font-size:8.8px;font-weight:bold;color:#9a9a9a;font-family:'DejaVu Sans','Liberation Sans',sans-serif;letter-spacing:-0.097px;">01:00:00Z</span>
<span class="t" style="left:460.85px;top:297.56px;font-size:8.8px;font-weight:bold;color:#9a9a9a;font-family:'DejaVu Sans','Liberation Sans',sans-serif;letter-spacing:0.770px;">2014-01-31</span>
<span class="t" style="left:528.20px;top:297.56px;font-size:8.8px;font-weight:bold;color:#9a9a9a;font-family:'DejaVu Sans','Liberation Sans',sans-serif;letter-spacing:-0.097px;">02:00:00Z</span>
<span class="t" style="left:460.85px;top:311.16px;font-size:8.8px;font-weight:bold;color:#9a9a9a;font-family:'DejaVu Sans','Liberation Sans',sans-serif;letter-spacing:0.770px;">2014-01-31</span>
<span class="t" style="left:528.20px;top:311.16px;font-size:8.8px;font-weight:bold;color:#9a9a9a;font-family:'DejaVu Sans','Liberation Sans',sans-serif;letter-spacing:-0.097px;">03:00:00Z</span>
<span class="t" style="left:460.85px;top:324.76px;font-size:8.8px;font-weight:bold;color:#9a9a9a;font-family:'DejaVu Sans','Liberation Sans',sans-serif;letter-spacing:0.770px;">2014-01-31</span>
<span class="t" style="left:528.20px;top:324.76px;font-size:8.8px;font-weight:bold;color:#9a9a9a;font-family:'DejaVu Sans','Liberation Sans',sans-serif;letter-spacing:-0.097px;">04:00:00Z</span>
<span class="t" style="left:460.85px;top:338.36px;font-size:8.8px;font-weight:bold;color:#9a9a9a;font-family:'DejaVu Sans','Liberation Sans',sans-serif;letter-spacing:0.770px;">2014-01-31</span>
<span class="t" style="left:528.20px;top:338.36px;font-size:8.8px;font-weight:bold;color:#9a9a9a;font-family:'DejaVu Sans','Liberation Sans',sans-serif;letter-spacing:-0.097px;">05:00:00Z</span>
<span class="t" style="left:460.85px;top:351.96px;font-size:8.8px;font-weight:bold;color:#9a9a9a;font-family:'DejaVu Sans','Liberation Sans',sans-serif;letter-spacing:0.770px;">2014-01-31</span>
<span class="t" style="left:528.20px;top:351.96px;font-size:8.8px;font-weight:bold;color:#9a9a9a;font-family:'DejaVu Sans','Liberation Sans',sans-serif;letter-spacing:-0.097px;">06:00:00Z</span>
<span class="t" style="left:460.85px;top:365.56px;font-size:8.8px;font-weight:bold;color:#9a9a9a;font-family:'DejaVu Sans','Liberation Sans',sans-serif;letter-spacing:0.770px;">2014-01-31</span>
<span class="t" style="left:528.20px;top:365.56px;font-size:8.8px;font-weight:bold;color:#9a9a9a;font-family:'DejaVu Sans','Liberation Sans',sans-serif;letter-spacing:-0.097px;">07:00:00Z</span>
<span class="t" style="left:460.85px;top:379.16px;font-size:8.8px;font-weight:bold;color:#9a9a9a;font-family:'DejaVu Sans','Liberation Sans',sans-serif;letter-spacing:0.770px;">2014-01-31</span>
<span class="t" style="left:528.20px;top:379.16px;font-size:8.8px;font-weight:bold;color:#9a9a9a;font-family:'DejaVu Sans','Liberation Sans',sans-serif;letter-spacing:-0.097px;">08:00:00Z</span>
<span class="t" style="left:460.85px;top:392.76px;font-size:8.8px;font-weight:bold;color:#9a9a9a;font-family:'DejaVu Sans','Liberation Sans',sans-serif;letter-spacing:0.770px;">2014-01-31</span>
<span class="t" style="left:528.20px;top:392.76px;font-size:8.8px;font-weight:bold;color:#9a9a9a;font-family:'DejaVu Sans','Liberation Sans',sans-serif;letter-spacing:-0.097px;">09:00:00Z</span>
<span class="t" style="left:460.85px;top:406.36px;font-size:8.8px;font-weight:bold;color:#9a9a9a;font-family:'DejaVu Sans','Liberation Sans',sans-serif;letter-spacing:0.770px;">2014-01-31</span>
<span class="t" style="left:527.65px;top:406.36px;font-size:8.8px;font-weight:bold;color:#9a9a9a;font-family:'DejaVu Sans','Liberation Sans',sans-serif;letter-spacing:-0.028px;">10:00:00Z</span>
<span class="t" style="left:460.85px;top:419.96px;font-size:8.8px;font-weight:bold;color:#9a9a9a;font-family:'DejaVu Sans','Liberation Sans',sans-serif;letter-spacing:0.770px;">2014-01-31</span>
<span class="t" style="left:527.65px;top:419.96px;font-size:8.8px;font-weight:bold;color:#9a9a9a;font-family:'DejaVu Sans','Liberation Sans',sans-serif;letter-spacing:-0.028px;">11:00:00Z</span>
<span class="t" style="left:460.85px;top:433.56px;font-size:8.8px;font-weight:bold;color:#9a9a9a;font-family:'DejaVu Sans','Liberation Sans',sans-serif;letter-spacing:0.770px;">2014-01-31</span>
<span class="t" style="left:527.65px;top:433.56px;font-size:8.8px;font-weight:bold;color:#9a9a9a;font-family:'DejaVu Sans','Liberation Sans',sans-serif;letter-spacing:-0.028px;">12:00:00Z</span>
<span class="t" style="left:460.85px;top:447.16px;font-size:8.8px;font-weight:bold;color:#9a9a9a;font-family:'DejaVu Sans','Liberation Sans',sans-serif;letter-spacing:0.770px;">2014-01-31</span>
<span class="t" style="left:527.65px;top:447.16px;font-size:8.8px;font-weight:bold;color:#9a9a9a;font-family:'DejaVu Sans','Liberation Sans',sans-serif;letter-spacing:-0.028px;">13:00:00Z</span>
<span class="t" style="left:460.85px;top:460.76px;font-size:8.8px;font-weight:bold;color:#9a9a9a;font-family:'DejaVu Sans','Liberation Sans',sans-serif;letter-spacing:0.770px;">2014-01-31</span>
<span class="t" style="left:527.65px;top:460.76px;font-size:8.8px;font-weight:bold;color:#9a9a9a;font-family:'DejaVu Sans','Liberation Sans',sans-serif;letter-spacing:-0.028px;">14:00:00Z</span>
<span class="t" style="left:460.85px;top:474.36px;font-size:8.8px;font-weight:bold;color:#9a9a9a;font-family:'DejaVu Sans','Liberation Sans',sans-serif;letter-spacing:0.770px;">2014-01-31</span>
<span class="t" style="left:527.65px;top:474.36px;font-size:8.8px;font-weight:bold;color:#9a9a9a;font-family:'DejaVu Sans','Liberation Sans',sans-serif;letter-spacing:-0.028px;">15:00:00Z</span>
<span class="t" style="left:460.85px;top:487.96px;font-size:8.8px;font-weight:bold;color:#9a9a9a;font-family:'DejaVu Sans','Liberation Sans',sans-serif;letter-spacing:0.770px;">2014-01-31</span>
<span class="t" style="left:527.65px;top:487.96px;font-size:8.8px;font-weight:bold;color:#9a9a9a;font-family:'DejaVu Sans','Liberation Sans',sans-serif;letter-spacing:-0.028px;">16:00:00Z</span>
<span class="t" style="left:460.85px;top:501.56px;font-size:8.8px;font-weight:bold;color:#9a9a9a;font-family:'DejaVu Sans','Liberation Sans',sans-serif;letter-spacing:0.770px;">2014-01-31</span>
<span class="t" style="left:527.65px;top:501.56px;font-size:8.8px;font-weight:bold;color:#9a9a9a;font-family:'DejaVu Sans','Liberation Sans',sans-serif;letter-spacing:-0.028px;">17:00:00Z</span>
<div style="left:724.4px;top:269.4px;width:12.6px;height:246.2px;background:#eeefea;border-left:1px solid #8a99b5"></div>
<div style="left:725.4px;top:269.4px;width:11.6px;height:11.2px;background:linear-gradient(90deg,#f7f8f5,#e9eae6);border-bottom:1px solid #8a99b5"></div>
<div style="left:725.4px;top:503.4px;width:11.6px;height:12.2px;background:linear-gradient(90deg,#f7f8f5,#e9eae6);border-top:1px solid #8a99b5"></div>
<svg style="left:727.9px;top:273.4px" width="6.6" height="3.8" viewBox="0 0 6.6 3.8"><path d="M0 3.7H6.6L3.3 0.2Z" fill="#111"/></svg>
<svg style="left:727.9px;top:508.2px" width="6.6" height="3.8" viewBox="0 0 6.6 3.8"><path d="M0 0.2H6.6L3.3 3.7Z" fill="#111"/></svg>
<div style="left:724.4px;top:280.8px;width:12.8px;height:11.8px;background:linear-gradient(90deg,#cfdff4 0%,#ffffff 32%,#e4edf8 60%,#bdd1ee 100%);border:1px solid #7f9dd8"></div>
<div style="left:728px;top:284.8px;width:6.4px;height:1.1px;background:#7492d2"></div>
<div style="left:728px;top:287.7px;width:6.4px;height:1.1px;background:#7492d2"></div>
<div style="left:403px;top:529px;width:99.6px;height:19.6px;background:linear-gradient(#ffffff 0%,#f2f6fb 40%,#d5e2f2 75%,#c4d6ec 100%);border:1px solid #7a8a99"></div>
<span class="t" style="left:416.80px;top:532.96px;font-size:8.8px;font-weight:bold;color:#222;font-family:'DejaVu Sans','Liberation Sans',sans-serif;letter-spacing:0.009px;">Create Display</span>
<div style="left:4.6px;top:557px;width:81.8px;height:14.6px;border-top:1px solid #b3b4b0;border-left:1px solid #b3b4b0;border-bottom:1px solid #fff;border-right:1px solid #fff"></div>
<div style="left:87.4px;top:557px;width:554.2px;height:14.6px;border-top:1px solid #b3b4b0;border-left:1px solid #b3b4b0;border-bottom:1px solid #fff;border-right:1px solid #fff"></div>
<div style="left:642.8px;top:557px;width:102.8px;height:14.6px;border-top:1px solid #b3b4b0;border-left:1px solid #b3b4b0;border-bottom:1px solid #fff;border-right:1px solid #fff"></div>
<span class="t" style="left:13.25px;top:558.56px;font-size:8.8px;font-weight:bold;color:#222;font-family:'DejaVu Sans','Liberation Sans',sans-serif;letter-spacing:-0.061px;">17:40:48 GMT</span>
<span class="t" style="left:43.92px;top:255.10px;font-size:24px;font-weight:bold;color:#00f400;font-family:'DejaVu Sans','Liberation Sans',sans-serif;letter-spacing:0.620px;">Data</span>
<span class="t" style="left:23.10px;top:284.10px;font-size:24px;font-weight:bold;color:#00f400;font-family:'DejaVu Sans','Liberation Sans',sans-serif;letter-spacing:-0.133px;">Sources</span>
<span class="t" style="left:242.72px;top:317.70px;font-size:24px;font-weight:bold;color:#00f400;font-family:'DejaVu Sans','Liberation Sans',sans-serif;letter-spacing:0.014px;">Fields</span>
<span class="t" style="left:593.80px;top:125.40px;font-size:24px;font-weight:bold;color:#00f400;font-family:'DejaVu Sans','Liberation Sans',sans-serif;letter-spacing:-0.299px;">Available</span>
<span class="t" style="left:597.33px;top:154.60px;font-size:24px;font-weight:bold;color:#00f400;font-family:'DejaVu Sans','Liberation Sans',sans-serif;letter-spacing:-0.109px;">Displays</span>
<span class="t" style="left:560.20px;top:317.70px;font-size:24px;font-weight:bold;color:#00f400;font-family:'DejaVu Sans','Liberation Sans',sans-serif;letter-spacing:0.350px;">Subsetting</span>
</div>
</body></html>
